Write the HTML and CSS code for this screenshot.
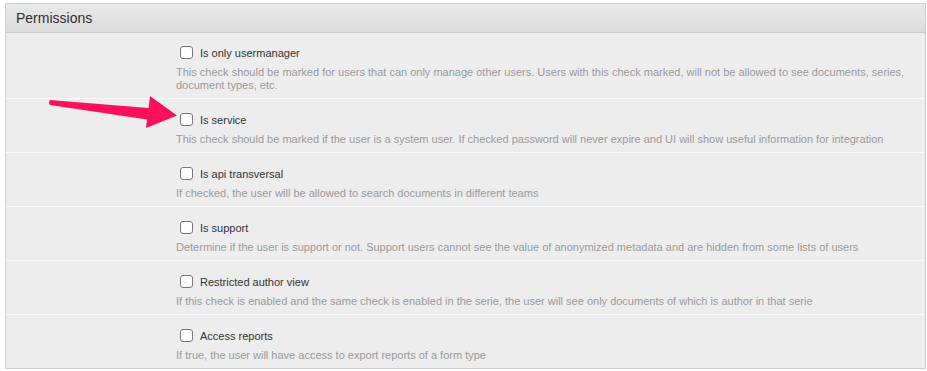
FILE: index.html
```html
<!DOCTYPE html>
<html>
<head>
<meta charset="utf-8">
<link rel="stylesheet" href="styles.css">
</head>
<body>
<div class="panel">
  <div class="panel-heading">Permissions</div>
  <div class="panel-body">
    <div class="perm first">
      <label class="check"><input type="checkbox"><span>Is only usermanager</span></label>
      <p class="help">This check should be marked for users that can only manage other users. Users with this check marked, will not be allowed to see documents, series, document types, etc.</p>
    </div>
    <div class="perm">
      <label class="check"><input type="checkbox"><span>Is service</span></label>
      <p class="help">This check should be marked if the user is a system user. If checked password will never expire and UI will show useful information for integration</p>
    </div>
    <div class="perm">
      <label class="check"><input type="checkbox"><span>Is api transversal</span></label>
      <p class="help">If checked, the user will be allowed to search documents in different teams</p>
    </div>
    <div class="perm">
      <label class="check"><input type="checkbox"><span>Is support</span></label>
      <p class="help">Determine if the user is support or not. Support users cannot see the value of anonymized metadata and are hidden from some lists of users</p>
    </div>
    <div class="perm">
      <label class="check"><input type="checkbox"><span>Restricted author view</span></label>
      <p class="help">If this check is enabled and the same check is enabled in the serie, the user will see only documents of which is author in that serie</p>
    </div>
    <div class="perm">
      <label class="check"><input type="checkbox"><span>Access reports</span></label>
      <p class="help">If true, the user will have access to export reports of a form type</p>
    </div>
  </div>
</div>
<svg class="arrow" width="927" height="371" viewBox="0 0 927 371">
  <path d="M50 100 Q48 102.5 50 105 L147 119.5 L146 128 L177 115.5 L150 96 L148.5 108 Z" fill="#fd0f59"/>
</svg>
</body>
</html>
```
FILE: styles.css
```css
html, body {
  margin: 0;
  padding: 0;
  background: #fff;
}
body {
  padding: 3px 1px 0 5px;
  font-family: "Liberation Sans", Arial, sans-serif;
}
.panel {
  border: 1px solid #cfcfcf;
  background: #ededed;
}
.panel-heading {
  height: 28px;
  line-height: 28px;
  padding-left: 10px;
  font-size: 14px;
  color: #2e2e2e;
  background: linear-gradient(#e9e9e9, #dcdcdc);
  border-bottom: 1px solid #cacaca;
}
.perm {
  padding: 14px 10px 6px 170px;
  border-top: 1px solid #fbfbfb;
}
.perm.first {
  border-top: 0;
  padding-top: 13px;
}
.check {
  display: flex;
  align-items: center;
  height: 13px;
  font-size: 11px;
  color: #333;
}
.check input {
  appearance: none;
  -webkit-appearance: none;
  width: 13px;
  height: 13px;
  margin: 0 7px 0 4px;
  border: 1px solid #777;
  border-radius: 3px;
  background: #fff;
  box-sizing: border-box;
}
.help {
  margin: 7px 0 0 0;
  font-size: 11px;
  line-height: 13px;
  color: #9a9a9a;
}
.arrow {
  position: absolute;
  left: 0;
  top: 0;
  pointer-events: none;
}
```
